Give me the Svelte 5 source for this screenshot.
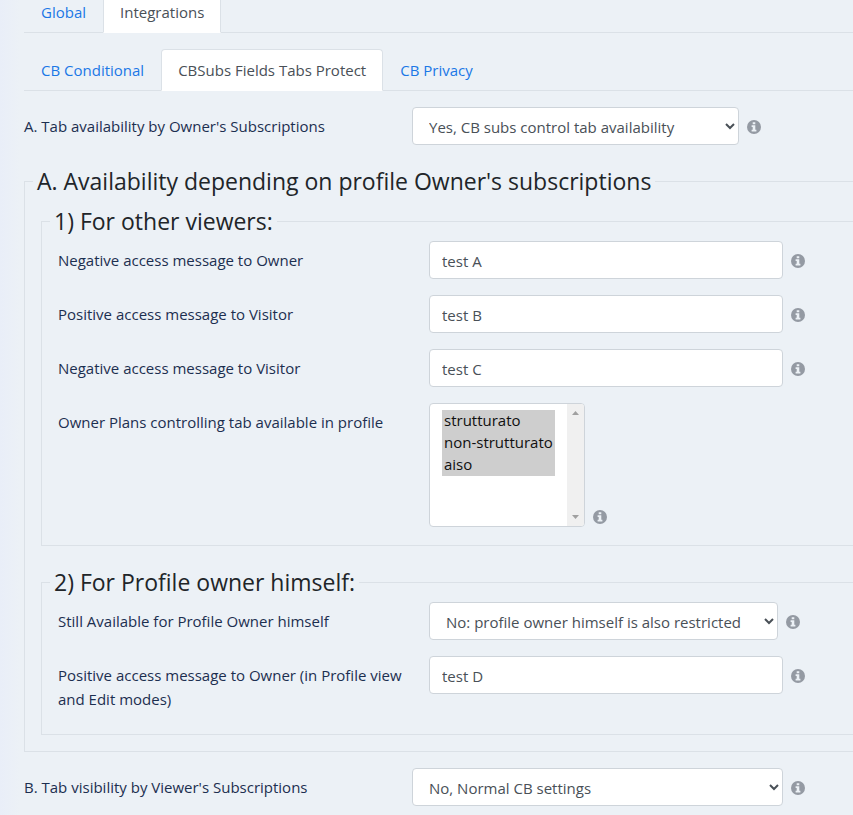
<script lang="ts">
  type TabItem = { id: string; label: string }

  const mainTabs: TabItem[] = [
    { id: 'global', label: 'Global' },
    { id: 'integrations', label: 'Integrations' },
  ]
  const pluginTabs: TabItem[] = [
    { id: 'conditional', label: 'CB Conditional' },
    { id: 'protect', label: 'CBSubs Fields Tabs Protect' },
    { id: 'privacy', label: 'CB Privacy' },
  ]
  const plans = ['strutturato', 'non-strutturato', 'aiso']

  let mainTab = $state('integrations')
  let pluginTab = $state('protect')
  let selectedPlans = $state([...plans])
  let messages = $state([
    { id: 'neg-owner', label: 'Negative access message to Owner', value: 'test A' },
    { id: 'pos-visitor', label: 'Positive access message to Visitor', value: 'test B' },
    { id: 'neg-visitor', label: 'Negative access message to Visitor', value: 'test C' },
  ])
  let ownerMessage = $state('test D')
</script>

{#snippet info()}
  <svg class="info" viewBox="0 0 14 14" aria-hidden="true">
    <circle cx="7" cy="7" r="7" fill="#949aa3" />
    <path
      d="M5.7 2.2h2.6v2H5.7zM4.6 5.3h3.7v4.5h1.1v1.8H4.6V9.8h1.1V7.1H4.6z"
      fill="#ecf1f6"
    />
  </svg>
{/snippet}

<main>
  <nav class="tabs top">
    {#each mainTabs as tab (tab.id)}
      <button class="tab" class:active={tab.id === mainTab} onclick={() => (mainTab = tab.id)}>
        {tab.label}
      </button>
    {/each}
  </nav>

  <nav class="tabs">
    {#each pluginTabs as tab (tab.id)}
      <button class="tab" class:active={tab.id === pluginTab} onclick={() => (pluginTab = tab.id)}>
        {tab.label}
      </button>
    {/each}
  </nav>

  <form>
    <div class="row">
      <label for="availability">A. Tab availability by Owner's Subscriptions</label>
      <div class="control">
        <select id="availability" class="field availability">
          <option>Yes, CB subs control tab availability</option>
          <option>No, Normal CB settings</option>
        </select>
        {@render info()}
      </div>
    </div>

    <fieldset>
      <legend>A. Availability depending on profile Owner's subscriptions</legend>

      <fieldset class="nested">
        <legend>1) For other viewers:</legend>
        {#each messages as message (message.id)}
          <div class="row">
            <label for={message.id}>{message.label}</label>
            <div class="control">
              <input id={message.id} class="field text" type="text" bind:value={message.value} />
              {@render info()}
            </div>
          </div>
        {/each}
        <div class="row">
          <label for="plans">Owner Plans controlling tab available in profile</label>
          <div class="control list">
            <div class="list-box">
              <select id="plans" class="field plans" multiple bind:value={selectedPlans}>
                {#each plans as plan (plan)}
                  <option value={plan}>{plan}</option>
                {/each}
              </select>
              <div class="scrollbar" aria-hidden="true">
                <svg viewBox="0 0 7 4"><path d="M0 4 3.5 0 7 4z" /></svg>
                <svg viewBox="0 0 7 4"><path d="M0 0h7L3.5 4z" /></svg>
              </div>
            </div>
            {@render info()}
          </div>
        </div>
      </fieldset>

      <fieldset class="nested">
        <legend>2) For Profile owner himself:</legend>
        <div class="row">
          <label for="still">Still Available for Profile Owner himself</label>
          <div class="control">
            <select id="still" class="field still">
              <option>No: profile owner himself is also restricted</option>
              <option>Yes: profile owner keeps access</option>
            </select>
            {@render info()}
          </div>
        </div>
        <div class="row">
          <label for="pos-owner">Positive access message to Owner (in Profile view and Edit modes)</label>
          <div class="control">
            <input id="pos-owner" class="field text" type="text" bind:value={ownerMessage} />
            {@render info()}
          </div>
        </div>
      </fieldset>
    </fieldset>

    <div class="row">
      <label for="visibility">B. Tab visibility by Viewer's Subscriptions</label>
      <div class="control">
        <select id="visibility" class="field visibility">
          <option>No, Normal CB settings</option>
          <option>Yes, CB subs control tab visibility</option>
        </select>
        {@render info()}
      </div>
    </div>
  </form>
</main>

<style>
  :global(body) {
    margin: 0;
    background: linear-gradient(to right, #e9eef8, #ecf1f6 20px);
  }

  main {
    --label-width: 388px;
    padding-left: 24px;
    font: 15px/24px 'Open Sans', 'Noto Sans', sans-serif;
    color: #1c2f50;
    overflow: hidden;
  }

  .tabs {
    display: flex;
    margin-bottom: 16px;
    border-bottom: 1px solid #dbe1e7;
  }

  .tab {
    margin-bottom: -1px;
    padding: 8px 16px;
    border: 1px solid transparent;
    border-radius: 4px 4px 0 0;
    background: none;
    color: #1b78e6;
    font: inherit;
    white-space: nowrap;
    cursor: pointer;
  }

  .tab.active {
    border-color: #dbe1e7 #dbe1e7 #fff;
    background: #fff;
    color: #495057;
  }

  /* the first bar sits flush with the top of the view */
  .top .tab {
    padding-top: 0;
    border-top: 0;
    border-radius: 0;
  }

  .row {
    display: grid;
    grid-template-columns: var(--label-width) 1fr;
    margin-bottom: 16px;
  }

  label {
    padding: 7px 16px 7px 0;
  }

  .control {
    display: flex;
    align-items: center;
    align-self: start;
    gap: 8px;
  }

  .field {
    box-sizing: border-box;
    height: 38px;
    padding: 7px 12px 5px;
    border: 1px solid #ced4da;
    border-radius: 4px;
    background-color: #fff;
    color: #495057;
    font: inherit;
  }

  .text {
    width: 354px;
  }

  .availability {
    width: 327px;
  }

  .still {
    width: 349px;
  }

  .visibility {
    width: 371px;
  }

  .control.list {
    align-items: flex-end;
    padding-bottom: 2px;
  }

  .list-box {
    position: relative;
    display: flex;
  }

  .plans {
    width: 156px;
    height: 124px;
    padding: 6px 29px 6px 12px;
  }

  .plans option {
    min-height: 22px;
    padding: 0 2px;
    box-sizing: border-box;
    line-height: 22px;
  }

  .plans option:checked {
    background: #cecece linear-gradient(#cecece, #cecece);
    color: #101010;
  }

  .scrollbar {
    position: absolute;
    top: 1px;
    right: 1px;
    bottom: 1px;
    display: flex;
    flex-direction: column;
    align-items: center;
    justify-content: space-between;
    box-sizing: border-box;
    width: 17px;
    padding: 7px 0;
    border-radius: 0 3px 3px 0;
    background: #f0f0f0;
    pointer-events: none;
  }

  .scrollbar svg {
    width: 7px;
    height: 4px;
    fill: #a0a0a0;
  }

  .info {
    flex: none;
    width: 14px;
    height: 14px;
    margin-top: 2px;
  }

  .list .info {
    margin-bottom: 3px;
  }

  fieldset {
    min-width: 0;
    margin: 0 0 16px;
    padding: 0 0 0 16px;
    border: 1px solid #dbe1e7;
    border-right: 0;
  }

  .nested {
    --label-width: 371px;
  }

  legend {
    margin-left: -8px;
    padding: 0 4px;
    color: #212529;
    font-size: 23px;
    line-height: 40px;
  }
</style>
